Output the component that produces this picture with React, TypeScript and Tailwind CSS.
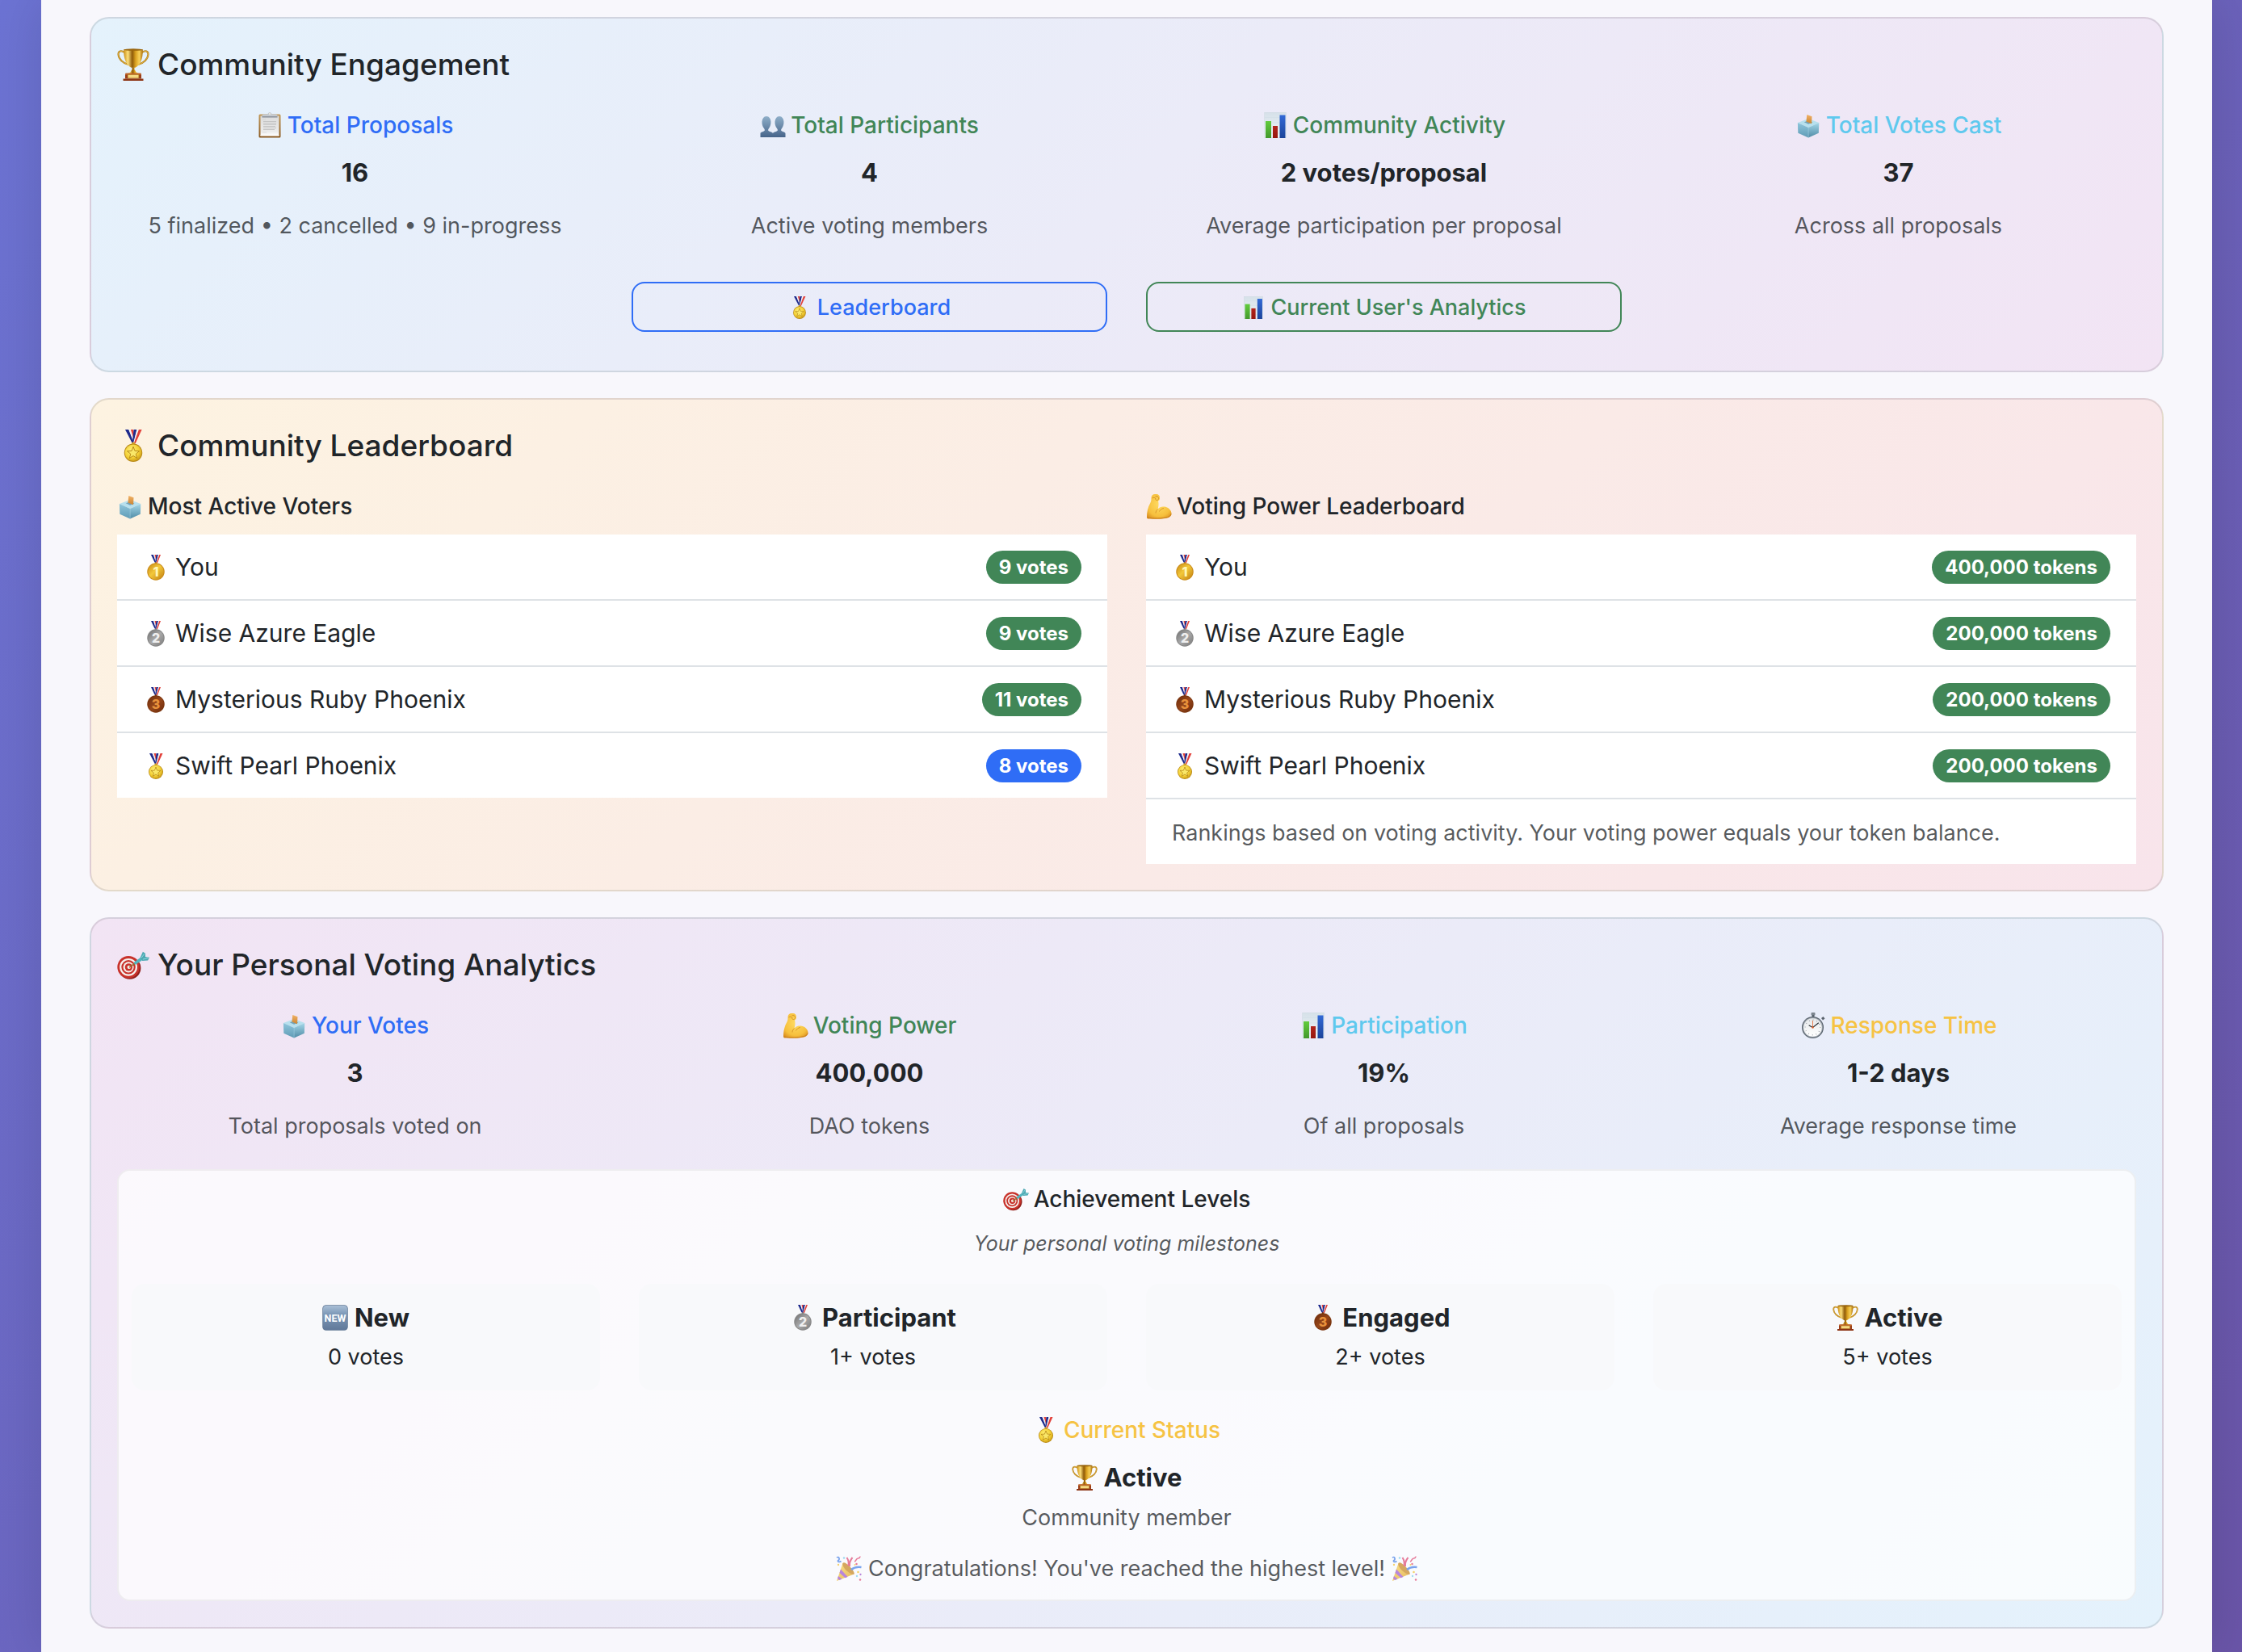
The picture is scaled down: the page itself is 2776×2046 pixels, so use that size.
import type { ReactNode } from 'react';

/* ---------- Pictograms, all drawn on a 64-unit grid ---------- */

function Gradients() {
  return (
    <svg className="absolute h-0 w-0" aria-hidden="true">
      <defs>
        <linearGradient id="cup" x1="0" x2="1" y1="0" y2="0">
          <stop offset="0" stopColor="#c98b12" />
          <stop offset="0.22" stopColor="#fde07a" />
          <stop offset="0.45" stopColor="#8f5a08" />
          <stop offset="0.62" stopColor="#d9a01f" />
          <stop offset="0.82" stopColor="#f9d25a" />
          <stop offset="1" stopColor="#a86c0c" />
        </linearGradient>
        <linearGradient id="paper" x1="0" x2="0" y1="0" y2="1">
          <stop offset="0" stopColor="#dcdcdc" />
          <stop offset="0.8" stopColor="#ececec" />
          <stop offset="1" stopColor="#ffffff" />
        </linearGradient>
        <linearGradient id="board" x1="0" x2="0" y1="0" y2="1">
          <stop offset="0" stopColor="#c29a5b" />
          <stop offset="1" stopColor="#8a5a22" />
        </linearGradient>
        <linearGradient id="bust" x1="0" x2="0" y1="0" y2="1">
          <stop offset="0" stopColor="#8fafc9" />
          <stop offset="1" stopColor="#46648a" />
        </linearGradient>
        <linearGradient id="chartBg" x1="0" x2="0" y1="0" y2="1">
          <stop offset="0" stopColor="#d6e1e9" />
          <stop offset="1" stopColor="#eef4f7" />
        </linearGradient>
        <linearGradient id="barGreen" x1="0" x2="0" y1="0" y2="1">
          <stop offset="0" stopColor="#62cc3d" />
          <stop offset="1" stopColor="#43982c" />
        </linearGradient>
        <linearGradient id="barRed" x1="0" x2="0" y1="0" y2="1">
          <stop offset="0" stopColor="#b3241c" />
          <stop offset="1" stopColor="#96180f" />
        </linearGradient>
        <linearGradient id="barBlue" x1="0" x2="0" y1="0" y2="1">
          <stop offset="0" stopColor="#3269d6" />
          <stop offset="1" stopColor="#1c449a" />
        </linearGradient>
        <linearGradient id="boxLeft" x1="0" x2="0" y1="0" y2="1">
          <stop offset="0" stopColor="#8fc6dc" />
          <stop offset="1" stopColor="#5f9bb5" />
        </linearGradient>
        <linearGradient id="boxRight" x1="0" x2="0" y1="0" y2="1">
          <stop offset="0" stopColor="#a5d8e9" />
          <stop offset="1" stopColor="#4f8ba6" />
        </linearGradient>
        <linearGradient id="ballotPaper" x1="0" x2="0" y1="0" y2="1">
          <stop offset="0" stopColor="#f2b266" />
          <stop offset="1" stopColor="#c98433" />
        </linearGradient>
        <radialGradient id="star" cx="0.4" cy="0.35" r="0.75">
          <stop offset="0" stopColor="#fff27a" />
          <stop offset="0.6" stopColor="#f3cf34" />
          <stop offset="1" stopColor="#c28f12" />
        </radialGradient>
        <linearGradient id="gold" x1="0" x2="1" y1="0" y2="1">
          <stop offset="0" stopColor="#c88914" />
          <stop offset="0.45" stopColor="#f3c83a" />
          <stop offset="1" stopColor="#c27f10" />
        </linearGradient>
        <linearGradient id="silver" x1="0" x2="1" y1="0" y2="1">
          <stop offset="0" stopColor="#6f6f6f" />
          <stop offset="0.5" stopColor="#a9a9a9" />
          <stop offset="1" stopColor="#7b7b7b" />
        </linearGradient>
        <linearGradient id="bronze" x1="0" x2="1" y1="0" y2="1">
          <stop offset="0" stopColor="#6e2c0c" />
          <stop offset="0.5" stopColor="#98471a" />
          <stop offset="1" stopColor="#6a2a0b" />
        </linearGradient>
        <radialGradient id="skin" cx="0.5" cy="0.4" r="0.7">
          <stop offset="0" stopColor="#ffdb62" />
          <stop offset="0.7" stopColor="#f6bf3c" />
          <stop offset="1" stopColor="#d98c1e" />
        </radialGradient>
        <linearGradient id="newBg" x1="0" x2="0" y1="0" y2="1">
          <stop offset="0" stopColor="#a9bfd6" />
          <stop offset="0.35" stopColor="#7d99b8" />
          <stop offset="1" stopColor="#61799a" />
        </linearGradient>
        <linearGradient id="dial" x1="0" x2="0" y1="0" y2="1">
          <stop offset="0" stopColor="#e6e8ea" />
          <stop offset="1" stopColor="#ffffff" />
        </linearGradient>
        <linearGradient id="cone" x1="0" x2="1" y1="0" y2="1">
          <stop offset="0" stopColor="#f9d85c" />
          <stop offset="1" stopColor="#dfa22c" />
        </linearGradient>
      </defs>
    </svg>
  );
}

type IconName =
  | 'trophy' | 'clipboard' | 'people' | 'chart' | 'ballot' | 'medal'
  | 'gold' | 'silver' | 'bronze' | 'muscle' | 'target' | 'stopwatch' | 'new' | 'party';

function RankMedal({ fill, rim, digit, n }: { fill: string; rim: string; digit: string; n: string }) {
  return (
    <>
      <path d="M20 0h6l7 19h-4z" fill="#1d2a8c" />
      <path d="M26 0h3l5 14-2 5z" fill="#f4f4f6" />
      <path d="M29 0h4l1 8-1.500 5z" fill="#e2403a" />
      <path d="M38 0h-5l-3 20h3z" fill="#1d2a8c" />
      <path d="M38 0h2.500l-7 20h-1z" fill="#f4f4f6" />
      <path d="M40.500 0H44l-8 20h-3z" fill="#e2403a" />
      <circle cx="32" cy="21" r="2.500" fill={rim} />
      <circle cx="32" cy="42" r="21.500" fill={rim} />
      <circle cx="32" cy="42" r="19.500" fill={fill} />
      <text
        x="32" y="53.500" textAnchor="middle" fontSize="32" fontWeight="800"
        fontFamily="Inter, sans-serif" fill={digit}
      >
        {n}
      </text>
    </>
  );
}

const drawings: Record<IconName, ReactNode> = {
  trophy: (
    <>
      <path d="M15 8C8 3 2 5 2.500 12c.5 9 9 17 20 20" fill="none" stroke="#b27c14" strokeWidth="3.400" />
      <path d="M15 8C8 3 2 5 2.500 12c.5 9 9 17 20 20" fill="none" stroke="#f0c552" strokeWidth="1.200" />
      <path d="M49 8c7-5 13-3 12.500 4-.5 9-9 17-20 20" fill="none" stroke="#b27c14" strokeWidth="3.400" />
      <path d="M49 8c7-5 13-3 12.500 4-.5 9-9 17-20 20" fill="none" stroke="#f0c552" strokeWidth="1.200" />
      <path d="M13 2c0 18 4 30 15 36h8c11-6 15-18 15-36z" fill="url(#cup)" />
      <ellipse cx="32" cy="2.500" rx="19" ry="2" fill="#9a650c" />
      <path d="M29 37h6l-1 4 2 3c1 3 4 5 8 6H20c4-1 7-3 8-6l2-3z" fill="url(#cup)" />
      <path d="M17 49h30l1 3v8H16v-8z" fill="#9b3f1b" />
      <path d="M17 49h30l1 3H16z" fill="#c56a2b" />
      <rect x="21" y="52" width="22" height="7" fill="#f5d983" stroke="#b07a22" strokeWidth="1" />
      <path d="M12 60h40v4H12z" fill="#8c3515" />
    </>
  ),
  clipboard: (
    <>
      <rect x="5" y="5" width="54" height="58" rx="3" fill="url(#board)" />
      <rect x="9" y="9" width="46" height="49" fill="url(#paper)" />
      <path d="M9 56h46v3H9z" fill="#fff" />
      <path d="M16 23h32M16 27h32M16 31h32M16 35h30M16 39h32M16 43h28" stroke="#c4c4c4" strokeWidth="2" />
      <path d="M14 18h8M14 50h10" stroke="#cfcfcf" strokeWidth="1" />
      <path d="M13 9c0-3 3-4 8-4h4c3 0 3-5 7-5s4 5 7 5h4c5 0 8 1 8 4v4H13z" fill="#c4c9cf" />
      <path d="M13 10h38v3H13z" fill="#8e949c" />
      <circle cx="32" cy="4" r="2" fill="#f3ede0" />
    </>
  ),
  people: (
    <>
      <path d="M1 62V53c0-4 6-4 10-7 2-2 0-4-1-6C3 32 2 11 16 10c14 1 13 22 6 30-1 2-3 4-1 6 4 3 11 3 11 7v9z" fill="url(#bust)" />
      <path d="M32 62V53c0-4 7-4 11-7 2-2 0-4-1-6-7-8-8-29 6-30 14 1 13 22 6 30-1 2-3 4-1 6 4 3 10 3 10 7v9z" fill="url(#bust)" />
    </>
  ),
  chart: (
    <>
      <rect x="5.500" y="0.500" width="53" height="63" fill="url(#chartBg)" stroke="#cbd7e0" strokeWidth="1" />
      <path d="M6 13h52M6 26h52M6 39h52M6 52h52" stroke="#cddbe6" strokeWidth="0.800" />
      <rect x="8" y="22" width="14" height="42" fill="url(#barGreen)" />
      <rect x="26" y="34" width="12" height="30" fill="url(#barRed)" />
      <rect x="43" y="7" width="14" height="57" fill="url(#barBlue)" />
    </>
  ),
  ballot: (
    <g transform="translate(4 5) scale(0.88 0.91)">
      <path d="M2 23 32 12l30 11-30 13z" fill="#b7e0ee" />
      <path d="M2 23l30 13v28L3 51z" fill="url(#boxLeft)" />
      <path d="M62 23 32 36v28l29-13z" fill="url(#boxRight)" />
      <path d="M32 36v28" stroke="#9bd0e2" strokeWidth="1.200" />
      <path d="M20 21.500 32 17l12 5-12 5z" fill="#3f7089" opacity="0.55" />
      <path d="m28 1 14 5-1 20-15-6z" fill="url(#ballotPaper)" />
    </g>
  ),
  medal: (
    <>
      <path d="M16 0h7l11 27h-4z" fill="#1d2a8c" />
      <path d="M23 0h4l7 19-1 7z" fill="#f4f4f6" />
      <path d="M27 0h5l3 14-2 5z" fill="#e2403a" />
      <path d="M39 0h-6l-3 27h3z" fill="#1d2a8c" />
      <path d="M39 0h4l-9 27h-2z" fill="#f4f4f6" />
      <path d="M43 0h6L36 28h-3z" fill="#e2403a" />
      <rect x="29" y="25" width="6" height="6" rx="2" fill="#d9a92a" />
      <circle cx="32" cy="46" r="18" fill="#b98a17" />
      <circle cx="32" cy="46" r="16.500" fill="url(#star)" />
      <path
        d="m32 34 3.200 8.200 8.800.6-6.800 5.500 2.300 8.500L32 52l-7.500 4.800 2.300-8.500-6.800-5.500 8.800-.6z"
        fill="#f9e768" stroke="#b98a17" strokeWidth="1.600"
      />
    </>
  ),
  gold: <RankMedal fill="url(#gold)" rim="#c98a18" digit="#fff6b8" n="1" />,
  silver: <RankMedal fill="url(#silver)" rim="#868686" digit="#efefef" n="2" />,
  bronze: <RankMedal fill="url(#bronze)" rim="#7c360f" digit="#e8923c" n="3" />,
  muscle: (
    <>
      <path
        d="M13 11c0-6 5-10 11-9 6-1 10 3 10 8 0 4 0 8-4 9 2 7 1 13-1 20 4-5 10-7 16-6 10 1 18 9 18 17s-7 11-16 12c-12 2-26 2-36 1-5 0-9 1-9-4 0-12 2-24 9-36 2-4 2-8 2-12z"
        fill="url(#skin)"
      />
      <path d="M15 12c3-2 5-2 8 0M23 8c4-2 7 0 8 3s-1 6-4 6-5-3-3-5" fill="none" stroke="#c57c1b" strokeWidth="1.500" />
      <path d="M29 39c-3 3-5 6-5 10M44 37c-6 1-9 4-11 8" fill="none" stroke="#d28b22" strokeWidth="1.600" />
      <path d="M3 60c14 3 38 3 50-1 5-1 8-4 9-8" fill="none" stroke="#c97d1c" strokeWidth="2" />
    </>
  ),
  target: (
    <>
      <circle cx="25" cy="38.500" r="22" fill="#8f1f1a" />
      <circle cx="22.500" cy="36.500" r="22" fill="#c8322b" />
      <circle cx="22.500" cy="36.500" r="17.500" fill="#f6f1ee" />
      <circle cx="22.500" cy="36.500" r="14" fill="#c8322b" />
      <circle cx="22.500" cy="36.500" r="10.500" fill="#f6f1ee" />
      <circle cx="23" cy="36.500" r="7.500" fill="#c8322b" />
      <circle cx="23.500" cy="36.500" r="3.500" fill="#f6f1ee" />
      <path d="m24 37 14-10" stroke="#9a6c2d" strokeWidth="2.600" />
      <path d="m33 27 15-11 4 5-16 11z" fill="#54b5bf" />
      <path d="m46 17 5-11 5 3 0 7 8 1-3 6-11 1z" fill="#4fa9b3" />
      <path d="m48 18 6-8M51 21l11-3" stroke="#8fd9de" strokeWidth="1.600" />
    </>
  ),
  stopwatch: (
    <>
      <rect x="27" y="0" width="10" height="7" rx="2" fill="#7c858e" />
      <rect x="29" y="6" width="6" height="6" fill="#59626c" />
      <path d="m52 14 5-4 4 5-5 4z" fill="#59626c" />
      <circle cx="31" cy="37" r="27" fill="#5c656f" />
      <circle cx="31" cy="37" r="24.500" fill="#a7afb7" />
      <circle cx="31" cy="37" r="22.500" fill="url(#dial)" />
      <circle cx="31" cy="37" r="18.500" fill="none" stroke="#7b838b" strokeWidth="3" strokeDasharray="1.200 8.480" />
      <path d="M31 37V20" stroke="#e2642d" strokeWidth="1.600" />
      <path d="m31 37 14-11M31 37l-9-5" stroke="#23282e" strokeWidth="2.200" strokeLinecap="round" />
      <circle cx="31" cy="37" r="2.400" fill="#e2642d" />
    </>
  ),
  new: (
    <>
      <rect x="0.500" y="0.500" width="63" height="63" rx="9" fill="#5d7593" />
      <rect x="2" y="2" width="60" height="60" rx="8" fill="url(#newBg)" />
      <text
        x="32" y="41" textAnchor="middle" fontSize="25" fontWeight="700"
        fontFamily="Roboto, sans-serif" fill="#fff"
      >
        NEW
      </text>
    </>
  ),
  party: (
    <>
      <path d="M2 62 17 18c6 1 26 18 28 27z" fill="url(#cone)" />
      <path d="m12 33 17 19-6 2.500L9 42zM6 50l9 7-6 3-5-4z" fill="#a35fd0" />
      <path d="M17 18c2-4 9 0 17 8s13 16 11 19-10-1-18-8-12-16-10-19z" fill="#c98c2b" />
      <path d="M30 24c3-6 2-12-3-20M34 26c-1-9 2-16 7-22" fill="none" stroke="#e0527a" strokeWidth="4" />
      <path d="M38 34c7-6 14-8 25-6" fill="none" stroke="#4f86e8" strokeWidth="5" />
      <path d="M2 4c6-4 8 5 4 7s2 6 7 2" fill="none" stroke="#4f86e8" strokeWidth="3.400" />
      <path d="M46 14c5-1 3-8 9-8s2-4 6-4" fill="none" stroke="#e0527a" strokeWidth="3.400" />
      <circle cx="20" cy="5" r="2.500" fill="#7fd0ee" />
      <circle cx="51" cy="20" r="2.500" fill="#e0527a" />
      <circle cx="47" cy="22" r="2" fill="#f3c53a" />
      <circle cx="55" cy="40" r="2.600" fill="#f3c53a" />
      <circle cx="61" cy="46" r="2.300" fill="#a35fd0" />
      <circle cx="52" cy="50" r="2.300" fill="#7fd0ee" />
      <circle cx="60" cy="59" r="2.500" fill="#e0527a" />
      <circle cx="6" cy="22" r="2.300" fill="#f3c53a" />
    </>
  ),
};

function Icon({ name, className }: { name: IconName; className: string }) {
  return (
    <svg viewBox="0 0 64 64" aria-hidden="true" className={`shrink-0 ${className}`}>
      {drawings[name]}
    </svg>
  );
}

/* ---------- Building blocks ---------- */

function Card({ title, icon, className, children }: {
  title: string; icon: IconName; className: string; children: ReactNode;
}) {
  return (
    <section className={`rounded-[24px] border-2 border-black/10 p-8 ${className}`}>
      <h4 className="mb-[31px] flex items-center gap-[10px] text-[37px] leading-[50px] font-medium">
        <Icon name={icon} className="size-10" />
        {title}
      </h4>
      {children}
    </section>
  );
}

function SubTitle({ icon, children, className }: { icon: IconName; children: ReactNode; className: string }) {
  return (
    <h6 className={`mb-4 flex items-center gap-1.5 text-[28px] leading-[38px] font-medium ${className}`}>
      <Icon name={icon} className="size-8" />
      {children}
    </h6>
  );
}

type StatData = { icon: IconName; label: string; color: string; value: string; note: string };

function Stat({ icon, label, color, value, note }: StatData) {
  return (
    <div className="flex flex-col items-center text-center">
      <SubTitle icon={icon} className={color}>{label}</SubTitle>
      <p className="text-[31px] leading-[48px] font-bold">{value}</p>
      <p className="mt-4 text-[27px] leading-[52px] text-[#212529]/75">{note}</p>
    </div>
  );
}

type Entry = { icon: IconName; name: string; score: string; badge: string };

function Board({ title, icon, entries, note }: {
  title: string; icon: IconName; entries: Entry[]; note?: string;
}) {
  return (
    <div>
      <SubTitle icon={icon} className="">{title}</SubTitle>
      <ul className="divide-y-2 divide-[#dee2e6] bg-white">
        {entries.map((e) => (
          <li key={e.name} className="flex items-center justify-between px-8 pt-5 pb-[19px]">
            <span className="flex items-center gap-2 text-[30px] leading-[41px]">
              <Icon name={e.icon} className="size-8" />
              {e.name}
            </span>
            <span className={`rounded-full px-4 text-2xl leading-[41px] font-bold text-white ${e.badge}`}>
              {e.score}
            </span>
          </li>
        ))}
        {note && <li className="px-8 pt-5 pb-4 text-[27px] leading-[44px] text-[#212529]/75">{note}</li>}
      </ul>
    </div>
  );
}

/* ---------- Data ---------- */

const BLUE = 'text-[#2f6df6]';
const GREEN = 'text-[#418657]';
const CYAN = 'text-[#5fc9ee]';
const YELLOW = 'text-[#f6c344]';
const BG_GREEN = 'bg-[#418657]';
const BG_BLUE = 'bg-[#2f6df6]';

const community: StatData[] = [
  { icon: 'clipboard', label: 'Total Proposals', color: BLUE, value: '16', note: '5 finalized • 2 cancelled • 9 in-progress' },
  { icon: 'people', label: 'Total Participants', color: GREEN, value: '4', note: 'Active voting members' },
  { icon: 'chart', label: 'Community Activity', color: GREEN, value: '2 votes/proposal', note: 'Average participation per proposal' },
  { icon: 'ballot', label: 'Total Votes Cast', color: CYAN, value: '37', note: 'Across all proposals' },
];

const personal: StatData[] = [
  { icon: 'ballot', label: 'Your Votes', color: BLUE, value: '3', note: 'Total proposals voted on' },
  { icon: 'muscle', label: 'Voting Power', color: GREEN, value: '400,000', note: 'DAO tokens' },
  { icon: 'chart', label: 'Participation', color: CYAN, value: '19%', note: 'Of all proposals' },
  { icon: 'stopwatch', label: 'Response Time', color: YELLOW, value: '1-2 days', note: 'Average response time' },
];

const voters: Entry[] = [
  { icon: 'gold', name: 'You', score: '9 votes', badge: BG_GREEN },
  { icon: 'silver', name: 'Wise Azure Eagle', score: '9 votes', badge: BG_GREEN },
  { icon: 'bronze', name: 'Mysterious Ruby Phoenix', score: '11 votes', badge: BG_GREEN },
  { icon: 'medal', name: 'Swift Pearl Phoenix', score: '8 votes', badge: BG_BLUE },
];

const holders: Entry[] = [
  { icon: 'gold', name: 'You', score: '400,000 tokens', badge: BG_GREEN },
  { icon: 'silver', name: 'Wise Azure Eagle', score: '200,000 tokens', badge: BG_GREEN },
  { icon: 'bronze', name: 'Mysterious Ruby Phoenix', score: '200,000 tokens', badge: BG_GREEN },
  { icon: 'medal', name: 'Swift Pearl Phoenix', score: '200,000 tokens', badge: BG_GREEN },
];

const levels: { icon: IconName; name: string; votes: string }[] = [
  { icon: 'new', name: 'New', votes: '0 votes' },
  { icon: 'silver', name: 'Participant', votes: '1+ votes' },
  { icon: 'bronze', name: 'Engaged', votes: '2+ votes' },
  { icon: 'trophy', name: 'Active', votes: '5+ votes' },
];

/* ---------- Page ---------- */

export default function App() {
  return (
    <div className="min-h-screen bg-[linear-gradient(135deg,#6c73d3,#6a55a8)] pr-[37px] pl-[51px] font-['Inter',sans-serif] text-[#212529]">
      <Gradients />
      <main className="flex min-h-screen flex-col gap-8 bg-[#f8f7fc] px-[60px] pt-[21px] pb-[29px] shadow-[0_0_60px_rgba(0,0,0,0.12)]">
        <Card title="Community Engagement" icon="trophy" className="bg-[linear-gradient(135deg,#e4f2fc,#f2e4f4)]">
          <div className="grid grid-cols-4 gap-x-12">
            {community.map((s) => <Stat key={s.label} {...s} />)}
          </div>
          <div className="mt-[43px] mb-4 grid grid-cols-4 gap-x-12">
            <button
              type="button"
              className="col-start-2 flex items-center justify-center gap-2 rounded-[16px] border-2 border-[#2f6df6] pt-2 pb-1.5 text-[27px] leading-[44px] font-medium text-[#2f6df6]"
            >
              <Icon name="medal" className="size-7" />
              Leaderboard
            </button>
            <button
              type="button"
              className="flex items-center justify-center gap-2 rounded-[16px] border-2 border-[#418657] pt-2 pb-1.5 text-[27px] leading-[44px] font-medium text-[#418657]"
            >
              <Icon name="chart" className="size-7" />
              Current User's Analytics
            </button>
          </div>
        </Card>

        <Card title="Community Leaderboard" icon="medal" className="bg-[linear-gradient(135deg,#fdf3e1,#f8e4eb)]">
          <div className="grid grid-cols-2 items-start gap-x-12">
            <Board title="Most Active Voters" icon="ballot" entries={voters} />
            <Board
              title="Voting Power Leaderboard"
              icon="muscle"
              entries={holders}
              note="Rankings based on voting activity. Your voting power equals your token balance."
            />
          </div>
        </Card>

        <Card title="Your Personal Voting Analytics" icon="target" className="bg-[linear-gradient(135deg,#f2e4f4,#e4f2fc)]">
          <div className="grid grid-cols-4 gap-x-12">
            {personal.map((s) => <Stat key={s.label} {...s} />)}
          </div>
          <div className="mt-[27px] flex flex-col items-center rounded-[16px] border-2 border-black/5 bg-white/75 p-4 text-center">
            <SubTitle icon="target" className="">Achievement Levels</SubTitle>
            <p className="text-[25px] leading-10 text-[#212529]/75 italic">Your personal voting milestones</p>
            <div className="mt-[30px] grid w-full grid-cols-4 gap-x-12">
              {levels.map((l) => (
                <div key={l.name} className="flex flex-col items-center rounded-[16px] bg-[#f8f9fb] pt-[18px] pb-4">
                  <strong className="flex items-center gap-2 text-[31px] leading-[48px] font-bold">
                    <Icon name={l.icon} className="size-8" />
                    {l.name}
                  </strong>
                  <span className="text-[27px] leading-[50px]">{l.votes}</span>
                </div>
              ))}
            </div>
            <div className="mt-[30px] flex flex-col items-center">
              <SubTitle icon="medal" className={YELLOW}>Current Status</SubTitle>
              <p className="flex items-center gap-2 text-[31px] leading-[48px] font-bold">
                <Icon name="trophy" className="size-8" />
                Active
              </p>
              <p className="text-[27px] leading-[52px] text-[#212529]/75">Community member</p>
              <p className="mt-[15px] flex items-center gap-2 text-[27px] leading-[44px] text-[#212529]/75">
                <Icon name="party" className="size-8 opacity-75" />
                Congratulations! You've reached the highest level!
                <Icon name="party" className="size-8 opacity-75" />
              </p>
            </div>
          </div>
        </Card>
      </main>
    </div>
  );
}
